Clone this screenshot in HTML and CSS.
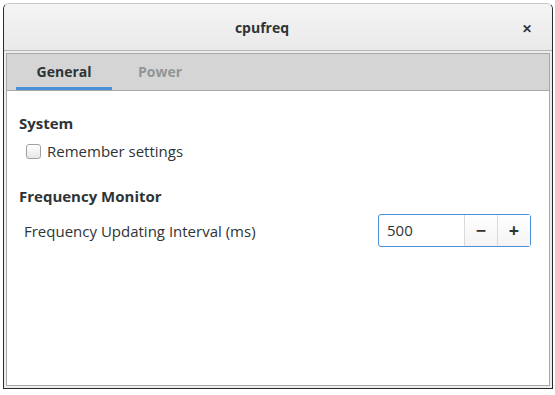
FILE: index.html
```html
<!DOCTYPE html>
<html lang="en">
<head>
    <meta charset="UTF-8">
    <title>cpufreq</title>
    <link rel="stylesheet" href="styles.css">
</head>
<body>
<div class="window">
    <!-- 标题栏 -->
    <div class="titlebar">
        <span class="title">cpufreq</span>
        <span class="close">&#x2715;</span>
    </div>
    <div class="body">
        <div class="notebook">
            <div class="tabs">
                <div class="tab active">General</div>
                <div class="tab">Power</div>
            </div>
            <div class="page">
                <h4>System</h4>
                <label class="check">
                    <span class="box"></span>
                    Remember settings
                </label>
                <h4>Frequency Monitor</h4>
                <div class="row">
                    <span>Frequency Updating Interval (ms)</span>
                    <div class="spin">
                        <span class="value">500</span>
                        <span class="btn">&minus;</span>
                        <span class="btn">+</span>
                    </div>
                </div>
            </div>
        </div>
    </div>
</div>
</body>
</html>
```
FILE: styles.css
```css
body {
    margin: 0;
    padding: 3px;
    background-color: #FFF;
    font-family: "Open Sans", "Noto Sans", sans-serif;
    font-size: 15px;
    color: #2E3436;
}
.window {
    width: 548px;
    height: 384px;
    border: 1px solid #2B2B2B;
    border-top-color: #C8C8C8;
    border-radius: 6px 6px 0 0;
    background-color: #F2F2F2;
    display: flex;
    flex-direction: column;
    overflow: hidden;
}
.titlebar {
    height: 46px;
    flex: none;
    border-bottom: 1px solid #B6B6B6;
    background: linear-gradient(#F4F4F4, #EAEAEA);
    display: flex;
    align-items: center;
    justify-content: center;
    padding-right: 32px;
    position: relative;
}
.title {
    font-weight: bold;
    font-size: 14px;
    color: #2E3436;
}
.close {
    position: absolute;
    right: 20px;
    top: 16px;
    font-size: 12px;
    font-weight: bold;
    color: #2E3436;
}
.body {
    flex: 1;
    padding: 2px 2px 2px 2px;
    background-color: #EDEDED;
    display: flex;
}
.notebook {
    flex: 1;
    border: 1px solid #A8A8A8;
    background-color: #FFF;
    display: flex;
    flex-direction: column;
}
.tabs {
    height: 36px;
    background-color: #D5D5D5;
    border-bottom: 1px solid #A8A8A8;
    display: flex;
    padding-left: 9px;
}
.tab {
    width: 96px;
    text-align: center;
    line-height: 36px;
    font-size: 14px;
    font-weight: bold;
    color: #929595;
    box-sizing: border-box;
}
.tab.active {
    color: #2E3436;
    border-bottom: 3px solid #4A90D9;
    line-height: 35px;
}
.page {
    padding: 16px 12px 0 12px;
}
.page h4 {
    font-size: 15px;
    margin: 6px 0 8px 0;
    color: #2E3436;
}
.check {
    display: flex;
    align-items: center;
    margin: 0 0 25px 7px;
    gap: 6px;
}
.box {
    width: 13px;
    height: 13px;
    border: 1px solid #A1A1A1;
    border-radius: 3px;
    background: linear-gradient(#FFF, #E6E6E6);
}
.row {
    display: flex;
    align-items: center;
    justify-content: space-between;
    padding-left: 5px;
    padding-right: 6px;
    margin-top: 6px;
}
.spin {
    width: 151px;
    height: 31px;
    border: 1px solid #4A90D9;
    border-radius: 3px;
    display: flex;
    background-color: #FFF;
}
.spin .value {
    flex: 1;
    line-height: 31px;
    padding-left: 8px;
    font-size: 15px;
}
.spin .btn {
    width: 32px;
    border-left: 1px solid #DADADA;
    text-align: center;
    line-height: 31px;
    font-size: 18px;
    font-weight: bold;
    background: linear-gradient(#FFF, #F4F4F4);
}
```
